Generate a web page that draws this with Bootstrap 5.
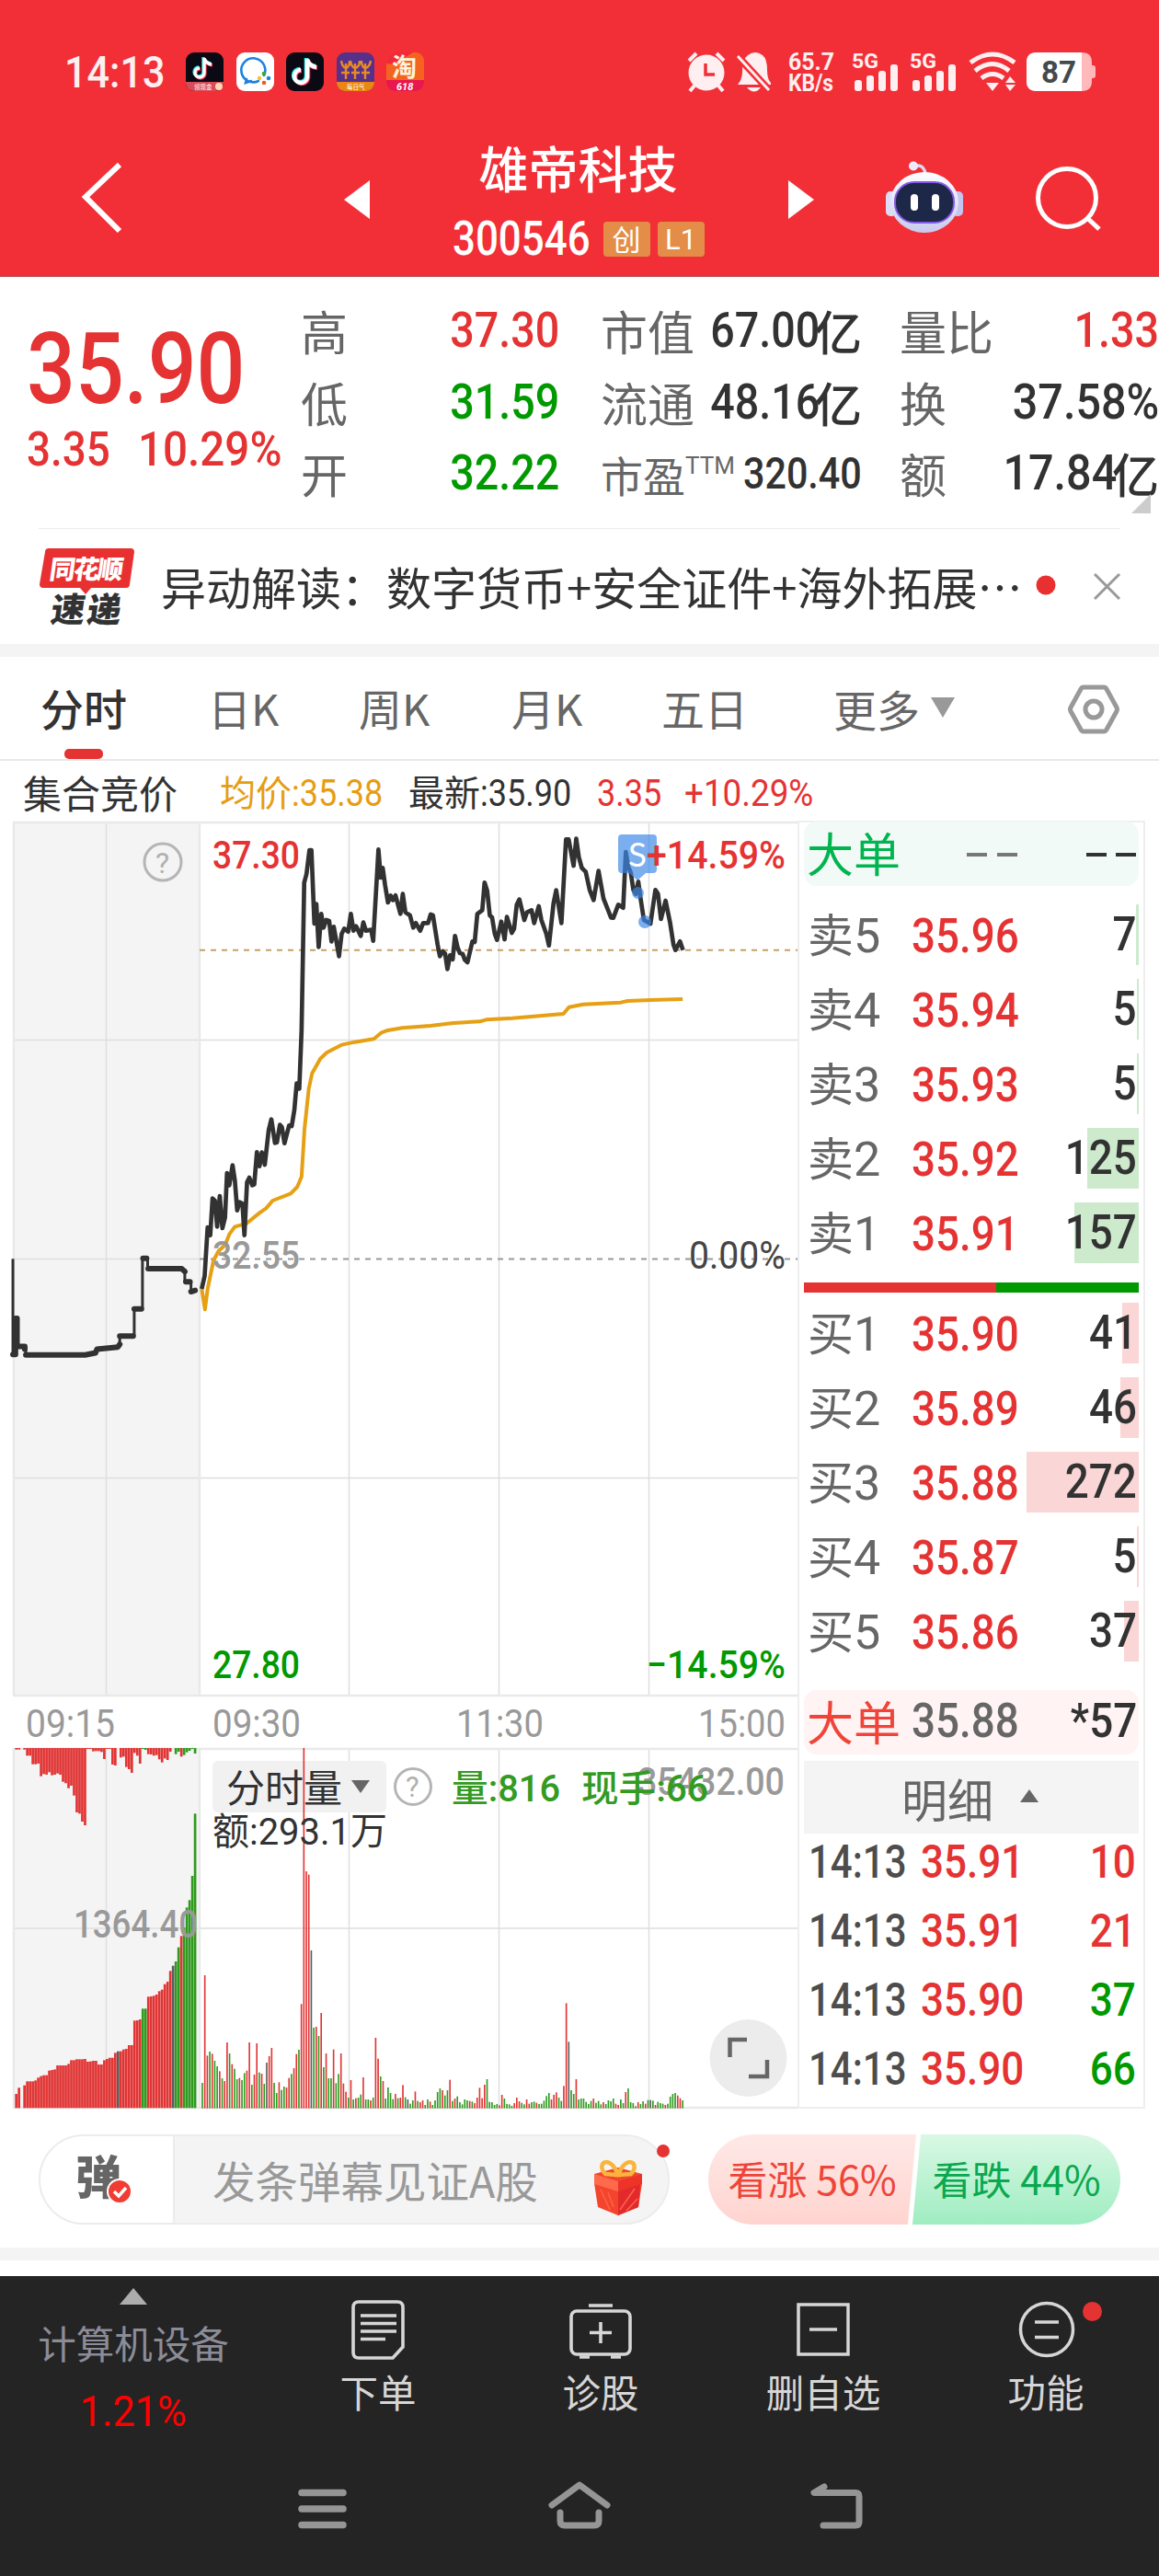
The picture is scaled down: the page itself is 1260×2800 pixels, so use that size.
<!DOCTYPE html>
<html lang="zh-CN">
<head>
<meta charset="utf-8">
<meta name="viewport" content="width=device-width, initial-scale=1">
<title>雄帝科技 300546</title>
<link href="https://cdn.jsdelivr.net/npm/bootstrap@5.3.0/dist/css/bootstrap.min.css" rel="stylesheet">
<style>
  :root { --up:#e53232; --down:#009900; --ink:#323232; --dim:#666; }
  body { width:1260px; height:2800px; margin:0; overflow:hidden; background:#fff; color:var(--ink);
         font-family:"Noto Sans CJK SC",sans-serif; line-height:1; }
  svg { display:block; flex:none; overflow:visible; }
  .num { display:inline-block; font-family:Roboto,"Noto Sans CJK SC",sans-serif; font-weight:500; white-space:pre; transform:scaleX(.88); transform-origin:left center; }
  .num-r { transform-origin:right center; }
  .num-c { transform-origin:center; }
  .wide { transform:scaleX(.915); }
  .up { color:var(--up); } .down { color:var(--down); } .dim { color:var(--dim); }
  .top-area { height:301px; background:#f22f37; border-bottom:1px solid #b5494e; color:#fff; }
  .status-bar { height:156px; padding:0 70px 0 70px; }
  .clock { font-size:49px; width:132px; color:#ffeff0; }
  .app-icons { gap:13.6px; }
  .title-bar { height:144px; padding:0 60px 0 86px; }
  .title-box { width:453px; margin-right:2px; }
  .stock-name { font-size:54px; font-weight:500; line-height:64px; height:66px; margin-top:-6px; }
  .stock-code { font-size:51px; width:148px; transform:scaleX(.86); }
  .tag { width:51px; height:38px; border-radius:4px; background:#e38d48; font-size:31px; line-height:36px; text-align:center; }
  .tag-latin { font-family:Roboto; line-height:39px; }
  .quote { height:273px; position:relative; }
  .q-main { width:327px; padding:43px 0 0 29px; }
  .q-price { font-size:107px; line-height:96px; height:127px; }
  .q-price .num { transform:scaleX(.87); }
  .q-chg { font-size:52px; line-height:36px; }
  .q-col { padding-top:20px; white-space:nowrap; }
  .q-row { height:77.5px; font-size:51px; }
  .q-row .num { font-size:53px; }
  .q-row .unit { font-size:51px; font-weight:500; margin-left:-5px; }
  .q-row .pe-label { font-size:46px; }
  .q-row .pe-note { font:26px/26px Roboto; padding-top:17px; }
  .q-row .pe-value { width:126px; }
  .q-row .pe-value .num { font-size:48px; flex:none; transform:scaleX(.86); }
  .corner { position:absolute; right:9px; bottom:16px; }
  .notice { height:126px; margin:0 42px; border-top:1px solid #ececec; }
  .notice-text { font-size:49px; line-height:64px; width:952px; padding-bottom:2px; }
  .band { height:14px; background:#f4f4f4; }
  .tabs { height:113px; border-bottom:2px solid #e8e8e8; font-size:47px; color:var(--dim); padding-right:43px; }
  .tab-on { color:var(--ink); font-weight:500; position:relative; }
  .tab-on::after { content:""; position:absolute; left:26px; bottom:0; width:42px; height:11px; border-radius:5px; background:var(--up); }
  .tabs > div { height:111px; line-height:109px; white-space:nowrap; }
  .info { height:65px; padding-left:25px; font-size:39px; padding-top:3px; }
  .info .num { font-size:40px; font-weight:400; transform:scaleX(.9); }
  .info .wide { transform:scaleX(.92); }
  .book { width:378px; height:1400px; border:2px solid #eee; padding:0 5px; }
  .b-row { height:66px; margin-bottom:15px; position:relative; padding:0 2px 0 4px; font-size:49px; }
  .b-row > * { position:relative; }
  .b-row .depth { position:absolute; right:0; top:0; height:66px; }
  .b-row .num { font-size:52px; }
  .b-row .lbl { width:113px; font-size:50px; color:var(--dim); }
  .b-row .lbl .num { font-weight:400; transform:scaleX(1); }
  .b-row .prc { width:115px; }
  .sell { background:#cdeacd; } .buy { background:#fad6d6; }
  .big { height:70px; border-radius:14px; padding:0 2px 3px 3px; font-size:52px; }
  .balance { height:11px; margin:21px 0 11px; }
  .detail { height:79px; background:#f4f4f4; font-size:50px; margin-top:7px; color:var(--dim); }
  .t-row { height:75px; padding:0 3px 0 5px; }
  .t-row .num { font-size:50px; }
  .t-row .t-time { width:122px; color:#4d4d4d; transform:scaleX(.84); }
  .social { height:151px; padding:28px 42px 0; }
  .chat { width:686px; height:98px; border:2px solid #ececec; border-radius:49px; background:#f4f4f4; position:relative; }
  .chat-l { width:146px; height:94px; background:#fff; border-radius:47px 0 0 47px; border-right:2px solid #ececec; padding-left:39px; }
  .chat-dot { position:absolute; right:-2px; top:9px; width:14px; height:14px; border-radius:50%; background:var(--up); }
  .chat-text { font-size:46.5px; color:#999; width:409px; padding-left:41px; white-space:nowrap; }
  .vote { height:98px; font-size:43px; padding-bottom:4px; }
  .vote-up { width:226px; color:#ee4539; background:linear-gradient(#fee9e7,#ffd4cf); border-radius:49px 0 0 49px; clip-path:polygon(0 0,100% 0,96% 100%,0 100%); }
  .vote-dn { width:226px; margin-left:-4px; color:#0aa84f; background:linear-gradient(#daf8e5,#9fedc1); border-radius:0 49px 49px 0; clip-path:polygon(4% 0,100% 0,100% 100%,0 100%); }
  .dock { height:326px; background:#242424; color:#d6d6d6; font-size:41.5px; }
  .dock-item { width:242px; height:170px; }
  .dock-dot { position:absolute; right:60px; top:28px; width:21px; height:21px; border-radius:50%; background:var(--up); }
  .sector { width:290px; padding-top:13px; }
  .sector-name { color:#8c8c99; margin-top:21px; }
  .sector-chg { color:#f00; font:46px/46px Roboto; margin-top:30px; }
  .sector-chg .num { font-weight:400; transform:scaleX(.94); }
  .sys { height:130px; padding:0 321px; }
</style>
<script src="https://cdn.jsdelivr.net/npm/bootstrap@5.3.0/dist/js/bootstrap.bundle.min.js"></script>
</head>
<body>
<header class="top-area">
  <div class="status-bar d-flex align-items-center">
    <span class="num clock">14:13</span>
    <div class="app-icons d-flex">
      <svg width="41" height="42" viewBox="0 0 41 42"><rect width="41" height="42" rx="9" fill="#0b0914"/><path d="M0 32H41V33a9 9 0 0 1-9 9H9a9 9 0 0 1-9-9z" fill="#d94b57"/><g fill="none" stroke-width="3.4"><path d="M20 6v16a5 5 0 1 1-5-5M20 7q2 5 8 6" stroke="#25e8e4" transform="translate(-1 -1)"/><path d="M20 6v16a5 5 0 1 1-5-5M20 7q2 5 8 6" stroke="#fe2b54" transform="translate(1 1)"/><path d="M20 6v16a5 5 0 1 1-5-5M20 7q2 5 8 6" stroke="#fff"/></g><text x="9" y="39.500" font-size="6.500" fill="#fff">领现金</text><circle cx="36" cy="37" r="4" fill="#fcd9b5"/></svg>
      <svg width="41" height="42" viewBox="0 0 41 42"><rect width="41" height="42" rx="9" fill="#fff"/><path d="M30 25A13 13 0 1 0 24 31M11 29l-1 4 6-2" fill="none" stroke="#1c83e0" stroke-width="2.6" stroke-linecap="round"/><circle cx="30" cy="23" r="2.3" fill="#3ca53b"/><circle cx="35" cy="28" r="2.3" fill="#1c83e0"/><circle cx="25" cy="28" r="2.3" fill="#fbc02d"/><circle cx="30" cy="33" r="2.3" fill="#ee5a24"/></svg>
      <svg width="41" height="42" viewBox="0 0 41 42"><rect width="41" height="42" rx="9" fill="#0b0914"/><g fill="none" stroke-width="4.6"><path d="M23 7v20a7 7 0 1 1-7-8M23 8q2 7 10 8" stroke="#25e8e4" transform="translate(-1 -1)"/><path d="M23 7v20a7 7 0 1 1-7-8M23 8q2 7 10 8" stroke="#fe2b54" transform="translate(1 1)"/><path d="M23 7v20a7 7 0 1 1-7-8M23 8q2 7 10 8" stroke="#fff"/></g></svg>
      <svg width="41" height="42" viewBox="0 0 41 42"><rect width="41" height="42" rx="9" fill="#56308a"/><path d="M0 32H41V33a9 9 0 0 1-9 9H9a9 9 0 0 1-9-9z" fill="#e88711"/><path d="M5 9q1 7 5 8 4-1 4-8M15 9q1 7 5 8 5-1 5-8M27 9q0 7 4 8 5-1 6-8M10 12v17M20 12v17M31 12v17M5 22h9M16 22h9M27 22h9" stroke="#e88a26" stroke-width="2.4" fill="none"/><text x="11" y="39.500" font-size="6.500" fill="#fff">每日气</text></svg>
      <svg width="41" height="42" viewBox="0 0 41 42"><rect width="41" height="42" rx="9" fill="#f5641e"/><path d="M0 12V9a9 9 0 0 1 9-9h20L8 13z" fill="#ef2a3b"/><path d="M0 30H41V33a9 9 0 0 1-9 9H9a9 9 0 0 1-9-9z" fill="#e8174d"/><text x="6" y="26" font-size="27" font-weight="700" fill="#fff3dc">淘</text><text x="11" y="41" font-size="11" font-weight="700" font-style="italic" font-family="Roboto" fill="#fff">618</text></svg>
    </div>
    <div class="d-flex align-items-center ms-auto">
      <svg width="368" height="44" viewBox="745 56 368 44" fill="#ffeff0">
        <circle cx="768" cy="79" r="19.5"/><path d="M749 66l8-8M787 66l-8-8M755 93l-5 6M781 93l5 6" stroke="#ffeff0" stroke-width="4"/><path d="M767 69v12h10" fill="none" stroke="#f22f37" stroke-width="3.5"/>
        <path d="M802 92q5-6 5-14 0-14 6-18 8-6 16 0 5 4 5 16 0 10 4 14v2zM812 95h15q-7 9-15 0z"/><path d="M801 60l35 38" stroke="#f22f37" stroke-width="8"/><path d="M802 61l34 37" stroke="#ffeff0" stroke-width="3"/>
        <g font-family="Roboto" font-weight="700" font-size="25"><text x="857" y="76" textLength="50" lengthAdjust="spacingAndGlyphs">65.7</text><text x="857" y="99" textLength="49" lengthAdjust="spacingAndGlyphs">KB/s</text><text x="926" y="74" font-size="22" textLength="29" lengthAdjust="spacingAndGlyphs">5G</text><text x="989" y="74" font-size="22" textLength="29" lengthAdjust="spacingAndGlyphs">5G</text></g>
        <g id="bars"><rect x="929" y="87" width="8" height="12" rx="3"/><rect x="942" y="82" width="8" height="17" rx="3"/><rect x="955" y="77" width="8" height="22" rx="3"/><rect x="968" y="70" width="8" height="29" rx="3"/></g><use href="#bars" x="63"/>
        <path d="M1055 68q24-18 48 0M1060 77q19-15 37 0M1067 85q12-9 24 0" fill="none" stroke="#ffeff0" stroke-width="5"/><path d="M1072 90h14l-7 9zM1093 90l5-7 6 7zM1093 92h11l-6 7z"/>
      </svg>
      <svg width="77" height="42" viewBox="-3 0 77 42"><path d="M11 0H60q11 0 11 11v3h1q3 0 3 3v8q0 3-3 3h-1v3q0 11-11 11H11Q0 42 0 31V11Q0 0 11 0z" fill="#ffb9bb"/><path d="M11 0H60V42H11Q0 42 0 31V11Q0 0 11 0z" fill="#fff"/><text x="16" y="33" font-family="Roboto" font-size="34" font-weight="700" fill="#434a4d" textLength="38" lengthAdjust="spacingAndGlyphs">87</text></svg>
    </div>
  </div>
  <div class="title-bar d-flex align-items-start">
    <svg class="mt-3" width="48" height="86" viewBox="0 0 48 86"><path d="M44 7L7 42 44 79" fill="none" stroke="#fff" stroke-width="6"/></svg>
    <svg width="28" height="42" viewBox="0 0 28 42" style="margin:40px 0 0 240px"><path d="M28 0V42L0 21z" fill="#fff"/></svg>
    <div class="title-box d-flex flex-column align-items-center">
      <div class="stock-name">雄帝科技</div>
      <div class="d-flex align-items-center gap-2" style="margin-top:18px">
        <span class="num stock-code">300546</span>
        <span class="tag ms-2">创</span><span class="tag tag-latin">L1</span>
      </div>
    </div>
    <svg width="28" height="42" viewBox="0 0 28 42" style="margin-top:40px"><path d="M0 0V42L28 21z" fill="#fff"/></svg>
    <svg width="86" height="80" viewBox="0 0 86 80" style="margin:18px 0 0 77px">
      <defs><linearGradient id="hd" x2="0" y2="1"><stop stop-color="#fff"/><stop offset="1" stop-color="#c9c9ee"/></linearGradient></defs>
      <path d="M31 7q10-4 13 7" fill="none" stroke="#d8d8f0" stroke-width="3.5"/><circle cx="31" cy="6.500" r="5" fill="#ecebfa"/>
      <rect x="1" y="34" width="12" height="27" rx="5" fill="#dcdcf6"/><rect x="73" y="34" width="12" height="27" rx="5" fill="#c4c4ee"/>
      <ellipse cx="43" cy="46" rx="37" ry="33" fill="url(#hd)"/><rect x="11" y="24" width="64" height="44" rx="21" fill="#1d2748" stroke="#8458e6" stroke-width="2"/>
      <rect x="28" y="37" width="8" height="18" rx="4" fill="#fff"/><rect x="51" y="37" width="8" height="18" rx="4" fill="#fff"/></svg>
    <svg width="74" height="74" viewBox="0 0 74 74" style="margin:24px 0 0 77px"><ellipse cx="35" cy="35" rx="31.500" ry="31.500" fill="none" stroke="#fff" stroke-width="5"/><path d="M57 57l13 12" stroke="#fff" stroke-width="5"/></svg>
  </div>
</header>

<section class="quote d-flex">
  <div class="q-main up">
    <div class="q-price"><span class="num">35.90</span></div>
    <div class="q-chg d-flex"><span class="num" style="width:121px">3.35</span><span class="num wide">10.29%</span></div>
  </div>
  <div class="q-col" style="width:281px">
    <div class="q-row d-flex justify-content-between align-items-center"><span class="dim">高</span><span class="num num-r up">37.30</span></div>
    <div class="q-row d-flex justify-content-between align-items-center"><span class="dim">低</span><span class="num num-r down">31.59</span></div>
    <div class="q-row d-flex justify-content-between align-items-center"><span class="dim">开</span><span class="num num-r down">32.22</span></div>
  </div>
  <div class="q-col" style="width:284px;margin-left:45px">
    <div class="q-row d-flex align-items-center"><span class="dim">市值</span><span class="num num-r ms-auto">67.00</span><span class="unit">亿</span></div>
    <div class="q-row d-flex align-items-center"><span class="dim">流通</span><span class="num num-r ms-auto">48.16</span><span class="unit">亿</span></div>
    <div class="q-row d-flex align-items-center"><span class="dim pe-label">市盈</span><span class="dim align-self-start pe-note">TTM</span><span class="pe-value ms-auto d-flex justify-content-end"><span class="num num-r">320.40</span></span></div>
  </div>
  <div class="q-col" style="width:282px;margin-left:41px">
    <div class="q-row d-flex align-items-center"><span class="dim">量比</span><span class="num num-r ms-auto up">1.33</span></div>
    <div class="q-row d-flex align-items-center"><span class="dim">换</span><span class="num num-r wide ms-auto">37.58%</span></div>
    <div class="q-row d-flex align-items-center"><span class="dim">额</span><span class="num num-r wide ms-auto">17.84</span><span class="unit">亿</span></div>
  </div>
  <svg class="corner" width="21" height="21"><path d="M21 0V21H0z" fill="#ccc"/></svg>
</section>

<section class="notice d-flex align-items-center">
  <svg width="133" height="86" viewBox="42 594 133 86"><path d="M53 595h89q4 0 4 4l-5 35q0 4-4 4H99l-6 7-6-7H47q-4 0-4-4l6-35q0-4 4-4z" fill="#e93030"/><g font-weight="900" transform="skewX(-8)"><text x="141" y="628" font-size="28" fill="#fff" textLength="80">同花顺</text><text x="149" y="675" font-size="37" fill="#323232" textLength="76">速递</text></g></svg>
  <div class="notice-text text-nowrap"><span>异动解读：数字货币+安全证件+海外拓展…</span></div>
  <svg width="92" height="30" viewBox="0 0 92 30"><circle cx="11" cy="13" r="10.500" fill="#e93030"/><path d="M64 1l27 27M91 1L64 28" stroke="#999" stroke-width="3"/></svg>
</section>
<div class="band"></div>

<nav class="tabs d-flex">
  <div class="tab-on" style="margin-left:44px;width:182px">分时</div>
  <div style="width:164px">日K</div><div style="width:166px">周K</div><div style="width:163px">月K</div><div style="width:187px">五日</div>
  <div class="d-flex align-items-center"><span style="width:106px">更多</span><svg width="26" height="22" viewBox="0 0 26 22" style="margin-top:-2px"><path d="M0 0H26L13 22z" fill="#999"/></svg></div>
  <svg class="ms-auto" style="margin-top:29px" width="56" height="56" viewBox="0 0 56 56" fill="none" stroke="#999" stroke-width="5"><path d="M17 4H39q2 0 3 2L53 26q1 2 0 4L42 50q-1 2-3 2H17q-2 0-3-2L3 30q-1-2 0-4L14 6q1-2 3-2z"/><circle cx="28" cy="28" r="9"/></svg>
</nav>

<div class="info d-flex align-items-center text-nowrap">
  <span style="font-size:42px;width:214px">集合竞价</span>
  <span style="color:#e69d12;width:205px">均价<span class="num">:35.38</span></span>
  <span style="width:205px">最新<span class="num">:35.90</span></span>
  <span class="up" style="width:95px"><span class="num">3.35</span></span><span class="up"><span class="num wide">+10.29%</span></span>
</div>

<main class="d-flex">
  <svg id="chart" width="867" height="1400" viewBox="0 892 867 1400" font-family="Roboto,'Noto Sans CJK SC'">
    <path d="M14 893H217V1843H14zM14 1900H217V2291H14z" fill="#f4f4f4"/>
    <g fill="none" stroke="#dedede" stroke-width="1.5"><path d="M14 1130.500H868M14 1368.500H217M14 1606.500H868M115.500 893V1843M379.500 893V1843M542.500 893V1843M705.500 893V1843M14 2096H868M115.500 1900V2291M379.500 1900V2291M542.500 1900V2291M705.500 1900V2291"/><path d="M14 894H868M14 1843H868M14 1901H868M217 893V1843M217 1900V2291M15 893V1843M15 1900V2291M14 2291H868" stroke="#e9e9e9" stroke-width="2.500"/></g>
    <path d="M217 1032.800H868" stroke="#c4a064" stroke-width="2" stroke-dasharray="6 6"/>
    <path d="M217 1368.500H868" stroke="#999" stroke-width="2" stroke-dasharray="6 6"/>
    <g transform="translate(0 1200) scale(.5612 .4464)" fill="none" stroke="#323232"><g stroke-width="3"><path vector-effect="non-scaling-stroke" d="M25 377V610M50 590V611M232 592V565M260 565V499M276 499V376M286 376V401M358 401V433M370 433V457"/></g><path vector-effect="non-scaling-stroke" stroke-width="6" stroke-linecap="round" stroke-linejoin="round" d="M25 610H30V522H33V590H48V597M50 611H165L185 606 188 597 228 592 232 585M232 565H258M260 499H274M277 376H284M287 401H352L358 408M360 433H368M370 457L378 454"/></g>
    <g transform="translate(200 880) scale(.35714 .33333)" fill="none" stroke-linejoin="round">
      <polyline vector-effect="non-scaling-stroke" stroke="#e6a014" stroke-width="4" points="54,1563 64,1630 72,1563 90,1470 105,1440 125,1420 138,1385 155,1360 190,1350 230,1315 250,1300 270,1275 325,1252 345,1230 358,1197 367,1040 380,910 390,860 415,812 435,792 480,767 520,758 578,748 600,728 620,720 665,712 750,705 820,696 900,691 920,685 1000,680 1155,666 1172,644 1215,635 1330,629 1350,624 1420,621 1518,618"/>
      <polyline vector-effect="non-scaling-stroke" stroke="#323232" stroke-width="4.700" points="54,1563 63,1520 72,1362 80,1388 87,1268 94,1275 101,1360 109,1260 117,1365 125,1330 131,1185 138,1225 148,1160 155,1210 162,1307 169,1280 178,1285 184,1388 192,1215 199,1200 208,1225 214,1222 222,1117 230,1163 237,1118 246,1158 258,1045 266,1010 277,1087 283,1085 292,1028 298,1035 306,1088 320,1030 328,1032 336,980 343,893 351,910 358,720 366,238 373,210 382,132 388,132 397,372 403,308 410,448 418,340 425,385 433,360 442,363 449,430 456,382 472,478 480,405 488,388 500,398 508,340 516,395 524,380 538,412 546,368 554,395 570,392 576,428 592,130 599,222 605,190 612,245 621,303 629,280 636,295 644,280 659,340 666,275 674,335 688,345 698,385 706,370 719,395 728,370 743,370 751,342 758,345 772,440 779,478 788,462 795,470 802,520 810,475 818,488 825,412 833,450 840,468 848,470 855,490 863,498 878,430 885,432 893,340 908,328 915,238 923,265 931,345 938,352 946,405 953,425 966,365 976,423 983,350 998,402 1005,388 1013,310 1021,293 1036,360 1044,335 1058,328 1066,370 1080,315 1088,360 1103,405 1111,443 1125,305 1133,263 1149,370 1163,97 1171,97 1186,183 1194,95 1202,155 1211,190 1223,203 1235,262 1247,295 1262,200 1277,290 1300,352 1307,353 1322,310 1337,320 1345,138 1352,185 1360,205 1368,262 1375,275 1383,235 1390,290 1400,360 1420,372 1435,262 1443,275 1452,357 1466,297 1480,370 1490,440 1496,458 1510,430 1519,458"/>
    </g>
    <g fill="#3d87e6" fill-opacity=".68"><path d="M676 907h34q4 0 4 4v34q0 4-4 4h-8l-9 8-9-8h-8q-4 0-4-4v-34q0-4 4-4z"/><circle cx="693.500" cy="970.500" r="6.500"/><circle cx="701" cy="1002" r="7"/></g>
    <text x="683" y="942" font-size="37" fill="#fff" font-family="Lato">S</text>
    <circle cx="177" cy="937" r="20" fill="none" stroke="#b5b5b5" stroke-width="3"/><text x="169" y="949" font-size="32" fill="#b0b0b0">?</text>
    <g font-size="42">
      <text x="231" y="944" fill="#e53232" font-weight="500" textLength="95" lengthAdjust="spacingAndGlyphs">37.30</text>
      <text x="703" y="944" fill="#e53232" font-weight="500" textLength="151" lengthAdjust="spacingAndGlyphs">+14.59%</text>
      <text x="231" y="1379" fill="#999" font-weight="500" textLength="95" lengthAdjust="spacingAndGlyphs">32.55</text>
      <text x="749" y="1379" fill="#444" textLength="105" lengthAdjust="spacingAndGlyphs">0.00%</text>
      <text x="231" y="1824" fill="#090" font-weight="500" textLength="95" lengthAdjust="spacingAndGlyphs">27.80</text>
      <text x="703" y="1824" fill="#090" font-weight="500" textLength="151" lengthAdjust="spacingAndGlyphs">−14.59%</text>
      <g fill="#999"><text x="28" y="1888" textLength="97" lengthAdjust="spacingAndGlyphs">09:15</text><text x="231" y="1888" textLength="96" lengthAdjust="spacingAndGlyphs">09:30</text><text x="496" y="1888" textLength="95" lengthAdjust="spacingAndGlyphs">11:30</text><text x="759" y="1888" textLength="95" lengthAdjust="spacingAndGlyphs">15:00</text></g>
    </g>
    <rect x="231" y="1914" width="189" height="56" rx="6" fill="#f1f1f1"/>
    <g id="vol" transform="translate(0 1830) scale(.5612 .33333)"></g>
    <text x="246" y="1959" font-size="42" fill="#323232">分时量</text><path d="M382 1935h20l-10 14z" fill="#666"/>
    <circle cx="449" cy="1942" r="19.500" fill="none" stroke="#b5b5b5" stroke-width="3"/><text x="441" y="1953" font-size="31" fill="#b0b0b0">?</text>
    <text x="693" y="1951" font-size="42" fill="#999" font-weight="500" textLength="160" lengthAdjust="spacingAndGlyphs">35432.00</text>
    <text x="80" y="2106" font-size="42" fill="#999" font-weight="500" textLength="135" lengthAdjust="spacingAndGlyphs">1364.40</text>
    <g font-size="40" font-weight="500" fill="#339a22"><text x="491" y="1958" textLength="118" lengthAdjust="spacingAndGlyphs">量:816</text><text x="632" y="1958" textLength="138" lengthAdjust="spacingAndGlyphs">现手:66</text></g>
    <text x="231" y="2005" font-size="41" fill="#323232" textLength="190" lengthAdjust="spacingAndGlyphs">额:293.1万</text>
    <circle cx="813.500" cy="2237" r="42" fill="#ececec"/><path d="M793.500 2236V2217H812M834 2239V2257H814" fill="none" stroke="#666" stroke-width="4.500"/>
  </svg>

  <aside class="book">
    <div class="big d-flex align-items-center" style="background:#f1faf6;margin:-1px 0 20px"><span style="color:#00b450;width:169px;font-size:51px">大单</span>
      <svg width="185" height="4" class="ms-auto mt-1"><path d="M0 2H22M33 2H55" stroke="#777" stroke-width="4"/><path d="M130 2H152M162 2H184" stroke="#323232" stroke-width="4"/></svg></div>
    <div class="b-row d-flex align-items-center"><i class="depth sell" style="width:3px"></i><span class="lbl">卖<span class="num">5</span></span><span class="prc up"><span class="num">35.96</span></span><span class="num num-r ms-auto">7</span></div>
    <div class="b-row d-flex align-items-center"><i class="depth sell" style="width:2px"></i><span class="lbl">卖<span class="num">4</span></span><span class="prc up"><span class="num">35.94</span></span><span class="num num-r ms-auto">5</span></div>
    <div class="b-row d-flex align-items-center"><i class="depth sell" style="width:2px"></i><span class="lbl">卖<span class="num">3</span></span><span class="prc up"><span class="num">35.93</span></span><span class="num num-r ms-auto">5</span></div>
    <div class="b-row d-flex align-items-center"><i class="depth sell" style="width:56px"></i><span class="lbl">卖<span class="num">2</span></span><span class="prc up"><span class="num">35.92</span></span><span class="num num-r ms-auto">125</span></div>
    <div class="b-row d-flex align-items-center"><i class="depth sell" style="width:70px"></i><span class="lbl">卖<span class="num">1</span></span><span class="prc up"><span class="num">35.91</span></span><span class="num num-r ms-auto">157</span></div>
    <div class="balance d-flex"><div style="width:57.3%;background:#e53232"></div><div class="flex-grow-1" style="background:#090"></div></div>
    <div class="b-row d-flex align-items-center"><i class="depth buy" style="width:18px"></i><span class="lbl">买<span class="num">1</span></span><span class="prc up"><span class="num">35.90</span></span><span class="num num-r ms-auto">41</span></div>
    <div class="b-row d-flex align-items-center"><i class="depth buy" style="width:20px"></i><span class="lbl">买<span class="num">2</span></span><span class="prc up"><span class="num">35.89</span></span><span class="num num-r ms-auto">46</span></div>
    <div class="b-row d-flex align-items-center"><i class="depth buy" style="width:122px"></i><span class="lbl">买<span class="num">3</span></span><span class="prc up"><span class="num">35.88</span></span><span class="num num-r ms-auto">272</span></div>
    <div class="b-row d-flex align-items-center"><i class="depth buy" style="width:2px"></i><span class="lbl">买<span class="num">4</span></span><span class="prc up"><span class="num">35.87</span></span><span class="num num-r ms-auto">5</span></div>
    <div class="b-row d-flex align-items-center"><i class="depth buy" style="width:16px"></i><span class="lbl">买<span class="num">5</span></span><span class="prc up"><span class="num">35.86</span></span><span class="num num-r ms-auto">37</span></div>
    <div class="big d-flex align-items-center" style="background:#fff3f3;margin-top:31px"><span style="color:#f04438;width:114px;font-size:51px">大单</span><span class="num dim">35.88</span><span class="num num-r ms-auto">*57</span></div>
    <div class="detail d-flex align-items-center"><span style="margin-left:106px;width:129px">明细</span><svg width="20" height="14" style="margin-top:-4px"><path d="M0 14H20L10 0z" fill="#666"/></svg></div>
    <div style="margin-top:-7px">
      <div class="t-row d-flex align-items-center"><span class="num t-time">14:13</span><span class="num up">35.91</span><span class="num num-r up ms-auto">10</span></div>
      <div class="t-row d-flex align-items-center"><span class="num t-time">14:13</span><span class="num up">35.91</span><span class="num num-r up ms-auto">21</span></div>
      <div class="t-row d-flex align-items-center"><span class="num t-time">14:13</span><span class="num up">35.90</span><span class="num num-r down ms-auto">37</span></div>
      <div class="t-row d-flex align-items-center"><span class="num t-time">14:13</span><span class="num up">35.90</span><span class="num num-r down ms-auto">66</span></div>
    </div>
  </aside>
</main>

<section class="social d-flex">
  <div class="chat d-flex align-items-center">
    <div class="chat-l d-flex align-items-center"><svg width="64" height="60" viewBox="0 0 64 60"><text x="-1" y="46" font-size="50" font-weight="900" fill="#666">弹</text><circle cx="47" cy="43" r="14" fill="#fff"/><circle cx="47" cy="43" r="12" fill="#f13c34"/><path d="M41 43l5 5 8-9" fill="none" stroke="#fff" stroke-width="3.500"/></svg></div>
    <div class="chat-text">发条弹幕见证A股</div>
    <svg width="58" height="62" viewBox="0 0 58 62" style="margin:16px 0 0 44px">
      <path d="M3 17L29 10 55 17V27L51 53 29 62 7 53 3 27z" fill="#f4442e"/><path d="M3 17L29 25V36L3 28z" fill="#ff6a4c"/><path d="M55 17L29 25V36L55 28z" fill="#ee3429"/><path d="M29 36L53 28 51 53 29 62z" fill="#e22a2c"/><path d="M10 34l10 22M18 37l6 16M47 33L31 56M50 44L38 57" stroke="#ff6247" stroke-width="1.500"/>
      <path d="M29 18C20-6 4 6 15 17zM29 18C38-6 54 6 43 17z" fill="none" stroke="#f9b53b" stroke-width="4.500"/></svg>
    <i class="chat-dot"></i>
  </div>
  <div class="d-flex" style="margin-left:42px">
    <div class="vote vote-up d-flex align-items-center justify-content-center">看涨 56%</div>
    <div class="vote vote-dn d-flex align-items-center justify-content-center">看跌 44%</div>
  </div>
</section>
<div class="band"></div><div style="height:17px"></div>

<footer class="dock">
  <div class="d-flex" style="height:196px">
    <div class="sector d-flex flex-column align-items-center">
      <svg width="30" height="18"><path d="M0 18H30L15 0z" fill="#adadad"/></svg>
      <div class="sector-name">计算机设备</div>
      <div class="sector-chg"><span class="num num-c">1.21%</span></div>
    </div>
    <div class="dock-item d-flex flex-column align-items-center"><svg width="70" height="70" viewBox="0 0 70 70" style="margin-top:23px" fill="none" stroke="#d6d6d6" stroke-width="3.600"><path d="M14 5H56q6 0 6 6V54L51 66H14q-6 0-6-6V11q0-6 6-6zM16 20H55M16 28.500H55M16 37H55M16 45.500H43"/></svg><span style="margin-top:12px">下单</span></div>
    <div class="dock-item d-flex flex-column align-items-center"><svg width="70" height="70" viewBox="0 0 70 70" style="margin-top:23px" fill="none" stroke="#d6d6d6" stroke-width="3.600"><rect x="3" y="15" width="64" height="47" rx="6"/><path d="M22 9H48M35 27V50M23 38.500H47M12 65H23M46 65H57"/></svg><span style="margin-top:12px">诊股</span></div>
    <div class="dock-item d-flex flex-column align-items-center"><svg width="70" height="70" viewBox="0 0 70 70" style="margin-top:23px" fill="none" stroke="#d6d6d6" stroke-width="3.500"><rect x="8" y="8" width="54" height="54"/><path d="M20 35H50"/></svg><span style="margin-top:12px">删自选</span></div>
    <div class="dock-item d-flex flex-column align-items-center position-relative"><svg width="70" height="70" viewBox="0 0 70 70" style="margin-top:23px" fill="none" stroke="#d6d6d6" stroke-width="3.500"><circle cx="36" cy="35" r="28.500"/><path d="M23 27H49M23 43.500H49"/></svg><span style="margin-top:12px">功能</span><i class="dock-dot"></i></div>
  </div>
  <div class="sys d-flex justify-content-between">
    <svg width="60" height="60" viewBox="321 2693 60 60" style="margin-top:23px" stroke="#959595" stroke-width="7.500" stroke-linecap="round"><path d="M328 2709.500H373M328 2727H373M328 2744.500H373"/></svg>
    <svg width="72" height="60" viewBox="594 2693 72 60" style="margin-top:23px" fill="none" stroke="#959595" stroke-width="7" stroke-linecap="round" stroke-linejoin="round"><path d="M600 2723L630 2701 660 2723M609 2731V2740q0 5 5 5H646q5 0 5-5V2731"/></svg>
    <svg width="60" height="60" viewBox="880 2693 60 60" style="margin-top:23px" fill="none" stroke="#959595" stroke-width="7" stroke-linecap="round" stroke-linejoin="round"><path d="M897 2703L886 2709.500H931q4 0 4 4V2741q0 4-4 4H896"/></svg>
  </div>
</footer>

<script>
  // Bar edges, one entry per bar; the letter is its colour: r rise, g fall, k flat, 0 no bar.
  const auction = "1338r 1318r 0 1310r 1297r 1297r 1297r 1294r 1285r 1280r 1277r 1277r 1262r 1260r 1258r 1245r 1245r 1245r 1245r 1240r 1228r 1228r 1225r 1225r 1225r 1224r 1233r 1232r 1230r 1230r 1242r 1242r 1228r 1224r 1220r 1220r 1204r 1199k 1199r 1193r 1191r 1179r 1179r 1099r 1098r 1095r 1060g 1060g 1021r 1020r 1018r 1014r 1003r 998r 980r 972r 937r 920k 906g 860g 823r 795g 730g 706g 627g 424g";
  const unmatched = "215r 215r 0 215r 235r 235r 263r 263r 261r 302r 295r 297r 289r 299r 297r 293r 297r 320r 325r 341r 333r 365r 420r 424r 450r 462r 213r 213r 221r 220r 220r 223r 246r 213r 213r 264r 267r 0 241r 238r 272r 279r 291r 226r 235r 261r 213g 216g 230r 231r 235r 233r 247r 257r 244r 249r 222r 0 230g 222g 238r 233g 224g 219g 213g 228g";
  const minutes = "1302g 951r 1213r 1200g 1207r 1230g 1248g 1264r 1287g 1296r 1170r 1206g 1241r 1256g 1290g 1286r 1293g 1270g 1262r 1170r 1308g 1275r 1173r 1268g 1272r 1305g 1236k 1215r 1188r 1302g 1335g 1300r 1325g 1314g 1317r 1286r 1273g 1254r 1208r 1194g 1045r 210r 612r 623r 870k 1122g 1119r 1149g 1074r 1251g 1206r 1287g 1287g 1193r 1303g 1273g 1206r 1304r 1331r 1350g 1293r 1356g 1352r 1350g 1340g 1284r 1356g 1356g 1359r 1350g 1155r 1223r 1281g 1296r 1353g 1317g 1335g 1355g 1338r 1352g 1350r 1309r 1349g 1356k 1370g 1359g 1330r 1361g 1365r 1359r 1374g 1356g 1363r 1374g 1359g 1332g 1320g 1326r 1343g 1326g 1292r 1361g 1353r 1346g 1365g 1372g 1356g 1359g 1361r 1363g 1368r 1350r 1318r 1352r 1308r 1290g 1364g 1365g 1374g 1371g 1375r 1341r 1353g 1371g 1372g 1377g 1368r 1350r 1362r 1367g 1372g 1356r 1370r 1365g 1363g 1367r 1371g 1370g 1360g 1345g 1335g 1356r 1341r 1333r 1350g 1361g 1312r 1042r 1168k 1326g 1338g 1290r 1356g 1353g 1353g 1364g 1371g 1361g 1353r 1367g 1361g 1372g 1365r 1371g 1359g 1362g 1353g 1370r 1374r 1356g 1368g 1332r 1320g 1365g 1368g 1378g 1365r 1371g 1362g 1370r 1358g 1358k 1360g 1374r 1364g 1368g 1370g 1374r 1370g 1347g 1338g 1335g 1343r 1352r 1359g";
  const tone = { r: "#e13434", g: "#2f9a1e", k: "#5c5c5c" };
  const vol = document.getElementById("vol");
  function draw(data, x0, step, w, base) {
    data.split(" ").forEach((d, i) => {
      const y = parseInt(d, 10);
      if (!y) return;
      const r = document.createElementNS("http://www.w3.org/2000/svg", "rect");
      r.setAttribute("x", x0 + i * step - w / 2);
      r.setAttribute("y", Math.min(y, base));
      r.setAttribute("width", w);
      r.setAttribute("height", Math.abs(base - y));
      r.setAttribute("fill", tone[d.slice(-1)]);
      vol.appendChild(r);
    });
  }
  draw(auction, 31.5, 5.33, 4.8, 1384);
  draw(unmatched, 31.5, 5.33, 4.8, 210);
  draw(minutes, 392, 4.796, 2.9, 1385);
</script>
</body>
</html>
